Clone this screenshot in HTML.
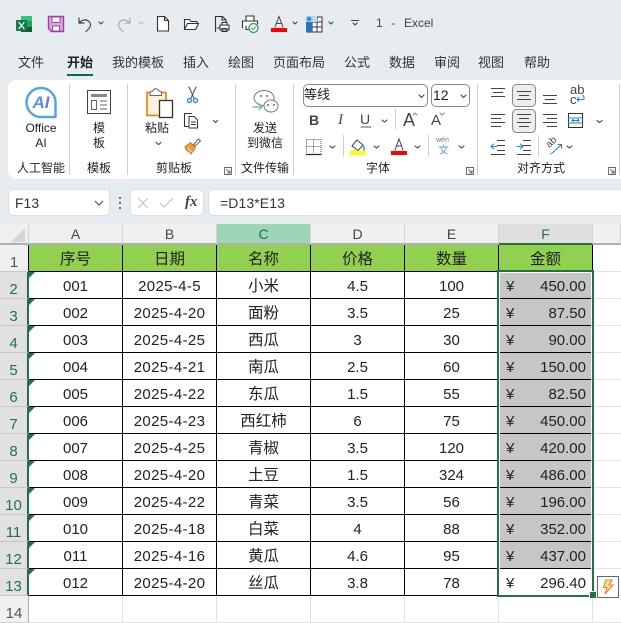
<!DOCTYPE html>
<html><head><meta charset="utf-8">
<style>
html,body{margin:0;padding:0;width:621px;height:623px;overflow:hidden;background:#e6ecf0}
body{position:relative;font-family:"Liberation Sans","Noto Sans CJK SC",sans-serif;color:#222}
.t{position:absolute;white-space:nowrap;font-size:12px;line-height:16px;text-align:center}
.tab{font-size:13px;top:54px;line-height:18px;color:#333}
.box{position:absolute;background:#fff;border:1px solid #dcdfe2;border-radius:5px;box-sizing:border-box}
table{position:absolute;left:0;top:224px;width:621px;border-collapse:separate;border-spacing:0;table-layout:fixed;font-size:15px}
td,th{padding:0;overflow:hidden;text-align:center;font-weight:normal;box-sizing:border-box;background:#fff;border-right:1px solid #e1e1e1;border-bottom:1px solid #e1e1e1;color:#222}
tr{height:27px}
tr.h{height:21px}
tr.h th{background:#f0f0f0;border-right:1px solid #d4d4d4;border-bottom:2px solid #b0b0b0;color:#444;line-height:17px;padding-top:2px;font-size:14px}
tr.h th.c{background:#9fd5b7;color:#217346}
tr.h th.f{background:#dfdfdf;color:#217346;border-bottom:2px solid #217346}
th.r{background:#e1e1e1;color:#217346;border-right:2px solid #217346;border-bottom:1px solid #c6c6c6;font-size:15px;position:relative}
th.r span{position:relative;top:4px}
th.n{background:#f0f0f0;color:#555;border-right:1px solid #b0b0b0;border-bottom:1px solid #d4d4d4;font-size:15px}
tr.g th.n{border-right:1px solid #000;border-bottom:1px solid #c6c6c6}
tr.d td{border-right:1px solid #000;border-bottom:1px solid #000;line-height:22px;padding-top:4px}
tr.d td:nth-child(3){letter-spacing:.35px}
tr.d td:nth-child(4){font-size:15.5px}
tr.g td{background:#92d050;border-right:1px solid #000;border-bottom:1px solid #000;font-size:15.5px;line-height:23px;padding-top:2px;color:#222}
td.a{position:relative}
td.a:before{content:"";position:absolute;left:0;top:0;border-top:6px solid #217346;border-right:6px solid transparent}
td.m{background:#c6c6c6;position:relative;text-align:right;padding-right:6px}
td.w{position:relative;text-align:right;padding-right:6px}
td.m i,td.w i{position:absolute;left:7px;top:4px;font-style:normal}
</style></head><body>

<div class="box" style="left:8px;top:80px;width:640px;height:99px;border:none;border-radius:8px"></div>

<svg width="621" height="623" style="position:absolute;left:0;top:0" fill="none" stroke-linecap="round">
<defs><linearGradient id="ai" x1="0" y1="0" x2="1" y2="0"><stop offset="0" stop-color="#4aa3ee"/><stop offset="1" stop-color="#7a6ce8"/></linearGradient></defs>
<!-- excel -->
<rect x="21" y="16" width="11" height="5" fill="#33c481"/><rect x="21" y="21" width="11" height="6" fill="#21a366"/><rect x="21" y="27" width="11" height="5" fill="#185c37"/>
<rect x="16" y="20" width="11" height="11" rx="1" fill="#107c41"/>
<path d="M19 22.500l5 6M24 22.500l-5 6" stroke="#fff" stroke-width="1.300"/>
<!-- save -->
<path d="M48.500 16.500h15v15h-12l-3-3z" fill="#d9a8dd" stroke="#9b3fa5" stroke-width="1.400"/>
<path d="M52 17v5.500h8V17z" fill="#fff" stroke="#9b3fa5"/><path d="M52.500 31v-5h7v5z" fill="#fff" stroke="#9b3fa5"/>
<!-- undo -->
<path d="M79 18v5h5M79.500 22.500c3-3 7-3.500 9.500-1 2.500 2.500 1.500 5.500-.5 7.500l-2.500 2.500" stroke="#444" stroke-width="1.200"/>
<path d="M99 22l2 2 2-2" stroke="#444" stroke-width="1.100"/>
<!-- redo -->
<path d="M130 18v5h-5M129.500 22.500c-3-3-7-3.500-9.500-1-2.500 2.500-1.500 5.500.5 7.500l2.500 2.500" stroke="#aaa" stroke-width="1.200"/>
<path d="M139 22l2 2 2-2" stroke="#bbb" stroke-width="1.100"/>
<!-- new -->
<path d="M157.500 16.500h7l4 4v10.500h-11zM164.500 16.500v4h4" fill="#fff" stroke="#333" stroke-width="1.100"/>
<!-- open -->
<path d="M184.500 29.500v-10h5l1.500 2h6v2M184.500 29.500l3-6h11l-3 6z" stroke="#333" stroke-width="1.100" fill="#fff"/>
<!-- preview -->
<path d="M215.500 31.500v-15h7l3.500 3.500v3M222 16.500v3.500h4" stroke="#333" stroke-width="1.100"/>
<path d="M219 28h-2M220 25h9v5h-9zM222 25v-2.500h5V25M222 28.500h5v3h-5z" stroke="#333" stroke-width="1.100" fill="#fff"/>
<!-- print check -->
<path d="M246 21v-5h8v5M242.500 28v-7h15v3M246 26v3.500h3" stroke="#333" stroke-width="1.100" fill="#fff"/>
<circle cx="253.500" cy="28" r="4.500" fill="#fff" stroke="#3c9f63" stroke-width="1.400"/><path d="M251.500 28l1.500 1.500 2.500-2.500" stroke="#3c9f63"/>
<!-- font color -->
<path d="M275 27l4-10.500 4 10.500M276.500 23.500h5" stroke="#444" stroke-width="1"/>
<rect x="271" y="28" width="16" height="4" fill="#f00"/>
<path d="M293 22l2 2 2-2" stroke="#444" stroke-width="1.100"/>
<!-- table -->
<rect x="307" y="17" width="15" height="15" stroke="#333" fill="#fff"/><path d="M312 17v15M317 17v15M307 22h15M307 27h15" stroke="#333" stroke-linecap="butt"/>
<rect x="306" y="22" width="6" height="10" fill="#1f74c4"/><rect x="312" y="16" width="5" height="6" fill="#bcdcf4"/>
<rect x="306" y="16" width="6" height="6" fill="#e6ecf0"/>
<path d="M306 19h6M309 16v6M307 17l4 4M311 17l-4 4" stroke="#2a7fd0" stroke-width="1"/>
<path d="M329 22l2 2 2-2M351.500 20.500h7M353 23l2 2 2-2" stroke="#444" stroke-width="1.100"/>

<!-- separators -->
<path d="M69.500 84v91M127.500 84v91M235.500 84v91M293.500 84v91M477.500 84v91M619.500 84v91M395.500 109v20M343.500 135v22M428.500 135v22M538.500 135v22" stroke="#cfcfcf" stroke-linecap="butt"/>

<!-- AI icon -->
<path d="M55.500 102.500A14.500 14.500 0 1 0 41 117H55.500z" stroke="#5aa1ec" stroke-width="2.500" stroke-linejoin="round"/>
<text x="41" y="108" text-anchor="middle" font-family="Liberation Sans" font-size="17" font-weight="bold" font-style="italic" fill="url(#ai)">AI</text>

<!-- template icon -->
<rect x="87.500" y="90.500" width="23" height="23" stroke="#444" fill="#fff"/>
<rect x="91" y="94" width="16" height="3" fill="#888"/>
<rect x="91.500" y="100.500" width="5" height="9" stroke="#666" stroke-width="1"/>
<path d="M100 101h7M100 105h7M100 109h7" stroke="#666" stroke-linecap="butt"/>

<!-- paste -->
<rect x="147" y="92.500" width="19" height="23" fill="#fff0d8" stroke="#e8851c" stroke-width="1.700"/>
<path d="M150 93c0-1 1-2 3-2 .5-3 5-3 5.500 0 2 0 3 1 3 2v2.500H150z" fill="#fff" stroke="#666"/>
<rect x="159.500" y="100.500" width="13" height="17" fill="#fff" stroke="#333" stroke-width="1.300"/>
<!-- scissors -->
<path d="M189 87l5 11M196 87l-5 11" stroke="#555" stroke-width="1.100"/>
<circle cx="189.500" cy="100.500" r="2" stroke="#2a83d0" stroke-width="1.300"/><circle cx="195.500" cy="100.500" r="2" stroke="#2a83d0" stroke-width="1.300"/>
<!-- copy -->
<path d="M188 126.500h-3.500v-13h7" stroke="#333" stroke-width="1.100"/>
<path d="M189 116.500h5l3.500 3.500v8h-8.500zM191.500 122h4M191.500 124.500h4" stroke="#333" stroke-width="1" fill="#fff"/>
<path d="M213.500 120.500l2 2 2-2" stroke="#444" stroke-width="1.100"/>
<!-- brush -->
<path d="M185 147l5.500-4.500 5 5-4.500 6.500-1.500-2.500-1 .5-1-2-1 .5z" fill="#f39a3c" stroke="#e8751c"/>
<path d="M188 148.500l3 3" stroke="#fff"/>
<path d="M193.500 144.500l5-5.500 2 2-5.500 5z" fill="#fff" stroke="#666"/>
<!-- paste chevron & launcher -->
<path d="M156 142.500l2.500 2 2.500-2" stroke="#444" stroke-width="1.100"/>
<path d="M224.500 167.500h7v7h-7zM226.500 169.500l3.500 3.500M230 170.500v2.500h-2.500" stroke="#666" stroke-width=".9"/>
<path d="M466.500 167.500h7v7h-7zM468.500 169.500l3.500 3.500M472 170.500v2.500h-2.500" stroke="#666" stroke-width=".9"/>
<path d="M608.500 167.500h7v7h-7zM610.500 169.500l3.500 3.500M614 170.500v2.500h-2.500" stroke="#666" stroke-width=".9"/>

<!-- wechat -->
<ellipse cx="264" cy="98" rx="10" ry="7.500" stroke="#777" stroke-width="1"/>
<ellipse cx="271" cy="106" rx="7" ry="6" fill="#fff" stroke="#777" stroke-width="1"/>
<path d="M253 107h9M259 104l3 3-3 3" stroke="#5bb98b" stroke-width="1.200"/>
<circle cx="261" cy="96" r="1" fill="#666"/><circle cx="267" cy="96" r="1" fill="#666"/><circle cx="268" cy="105" r="1" fill="#666"/><circle cx="274" cy="105" r="1" fill="#666"/>

<!-- font combos chevrons -->
<path d="M419 95l2.500 2.500 2.500-2.500M461 95l2.500 2.500 2.500-2.500M382 120l2.500 2 2.500-2M330 146l2.500 2 2.500-2M374 146l2.500 2 2.500-2M415 146l2.500 2 2.500-2M459 146l2.500 2 2.500-2M597 120.500l2.500 2 2.500-2M567 146l2.500 2 2.500-2" stroke="#444" stroke-width="1.100"/>
<!-- U underline -->
<path d="M361 127h10" stroke="#555"/>
<!-- grow/shrink carets -->
<path d="M413 115l2-2 2 2" stroke="#4f9bd9" stroke-width="1.100"/>
<path d="M440 113l2 2 2-2" stroke="#4f9bd9" stroke-width="1.100"/>
<!-- border icon -->
<path d="M306.500 139.500h14.500v14M306.500 139.500v14M306.500 146.500h14.500M313.500 139.500v14" stroke="#555" stroke-dasharray="1 1" stroke-linecap="butt"/>
<path d="M306 154.500h15.500" stroke="#222" stroke-width="1.200" stroke-linecap="butt"/>
<!-- fill icon -->
<path d="M352 146l5-6 6 5-5 5.500z" stroke="#444" fill="#fff"/><path d="M363 146c1.500 1 1.500 3 .5 4" stroke="#2a83d0" stroke-width="1.300"/>
<rect x="350" y="151" width="16" height="4" fill="#ff0"/>
<!-- font color 2 -->
<path d="M395 150l4-11 4 11M396.500 146h5" stroke="#444" stroke-width="1"/>
<rect x="391" y="151" width="16" height="4" fill="#f00"/>
<!-- wen char -->
<path d="M439 147h9M443.500 145v2M441 148c1 3 3 5 6 6M446 148c-1 3-3 5-6 6" stroke="#5aa1d8" stroke-width=".9"/>

<!-- align pressed boxes -->
<rect x="512.500" y="84.500" width="23" height="22" rx="4" fill="#ededed" stroke="#8a8a8a"/>
<rect x="512.500" y="109.500" width="23" height="23" rx="4" fill="#ededed" stroke="#8a8a8a"/>
<g stroke="#444" stroke-linecap="butt">
<path d="M491 88.500h14M493 92.500h10M491 96.500h14"/>
<path d="M517 91.500h14M519 95.500h10M517 99.500h14"/>
<path d="M543 95.500h14M545 99.500h10M543 103.500h14"/>
<path d="M491 114.500h14M491 118.500h10M491 122.500h14M491 126.500h10"/>
<path d="M517 114.500h14M519 118.500h10M517 122.500h14M519 126.500h10"/>
<path d="M543 114.500h14M547 118.500h10M543 122.500h14M547 126.500h10"/>
<path d="M497 140.500h8M497 145.500h8M497 150.500h8M491 154.500h14" stroke-width=".9"/>
<path d="M523 140.500h8M523 145.500h8M523 150.500h8M517 154.500h14" stroke-width=".9"/>
</g>
<path d="M491 146.500h6M493.500 144l-2.500 2.500 2.500 2.500M517 146.500h6M520.500 144l2.500 2.500-2.500 2.500" stroke="#2a83d0" stroke-width="1.100"/>
<!-- wrap arrow -->
<path d="M577 99.500h6c1.500 0 1.500-3 0-4M577 99.500l2-2M577 99.500l2 2" stroke="#2a83d0" stroke-width="1.100"/>
<!-- merge -->
<rect x="568.500" y="113.500" width="14" height="14" stroke="#333"/><path d="M568 118h15M568 123h15" stroke="#2a83d0" stroke-width="1"/><path d="M572 120.500h7M573.500 119l-1.500 1.500 1.500 1.500M577.500 119l1.500 1.500-1.500 1.500" stroke="#2a83d0" stroke-linecap="butt"/>
<!-- orientation -->
<path d="M551 154l10-9M558 144.500h3.500v3.500" stroke="#2a83d0" stroke-width="1.100"/>

<!-- formula bar icons -->
<circle cx="120" cy="198" r="1" fill="#444"/><circle cx="120" cy="203" r="1" fill="#444"/><circle cx="120" cy="208" r="1" fill="#444"/>
</svg>

<!-- tabs -->
<span class="t tab" style="left:18px">文件</span>
<span class="t tab" style="left:67px;font-weight:bold;color:#222">开始</span>
<div style="position:absolute;left:67px;top:74px;width:26px;height:2px;background:#0e6b3c"></div>
<span class="t tab" style="left:112px">我的模板</span>
<span class="t tab" style="left:183px">插入</span>
<span class="t tab" style="left:228px">绘图</span>
<span class="t tab" style="left:273px">页面布局</span>
<span class="t tab" style="left:344px">公式</span>
<span class="t tab" style="left:389px">数据</span>
<span class="t tab" style="left:434px">审阅</span>
<span class="t tab" style="left:478px">视图</span>
<span class="t tab" style="left:524px">帮助</span>
<span class="t" style="left:376px;top:15px;color:#444;font-size:12px">1</span>
<span class="t" style="left:391px;top:15px;color:#444;font-size:12px">-</span>
<span class="t" style="left:404px;top:15px;color:#444;font-size:12px">Excel</span>

<!-- ribbon text -->
<span class="t" style="left:11px;width:60px;top:120px">Office</span>
<span class="t" style="left:11px;width:60px;top:135px">AI</span>
<span class="t" style="left:69px;width:60px;top:120px">模</span>
<span class="t" style="left:69px;width:60px;top:135px">板</span>
<span class="t" style="left:137px;width:40px;top:120px">粘贴</span>
<span class="t" style="left:235px;width:60px;top:120px">发送</span>
<span class="t" style="left:235px;width:60px;top:135px">到微信</span>
<span class="t" style="left:11px;width:60px;top:160px">人工智能</span>
<span class="t" style="left:69px;width:60px;top:160px">模板</span>
<span class="t" style="left:144px;width:60px;top:160px">剪贴板</span>
<span class="t" style="left:235px;width:60px;top:160px">文件传输</span>
<span class="t" style="left:348px;width:60px;top:160px">字体</span>
<span class="t" style="left:511px;width:60px;top:160px">对齐方式</span>

<!-- font controls -->
<div style="position:absolute;left:302.500px;top:83.500px;width:125px;height:23px;box-sizing:border-box;border:1px solid #8a8a8a;border-radius:5px;background:transparent"></div>
<div style="position:absolute;left:430.500px;top:83.500px;width:39px;height:23px;box-sizing:border-box;border:1px solid #8a8a8a;border-radius:5px"></div>
<span class="t" style="left:304px;top:87px;font-size:13px">等线</span>
<span class="t" style="left:433px;top:87px;font-size:14px">12</span>
<span class="t" style="left:309px;top:112px;font-weight:bold;font-size:14px;color:#444">B</span>
<span class="t" style="left:338px;top:112px;font-style:italic;font-family:'Liberation Serif',serif;font-size:15px;color:#444">I</span>
<span class="t" style="left:360px;top:111px;font-size:14px;color:#444">U</span>
<span class="t" style="left:403px;top:112px;font-size:18px;color:#444">A</span>
<span class="t" style="left:431px;top:113px;font-size:15px;color:#444">A</span>
<span class="t" style="left:436px;top:136px;font-size:7px;line-height:9px;color:#777">wén</span>
<span class="t" style="left:570px;top:84px;font-size:13px;line-height:12px;color:#444">ab</span>
<span class="t" style="left:570px;top:94px;font-size:13px;line-height:11px;color:#444">c</span>
<span class="t" style="left:546px;top:137px;font-size:10px;line-height:11px;color:#444;transform:rotate(-45deg)">ab</span>

<!-- formula bar -->
<div class="box" style="left:8px;top:189px;width:102px;height:27px"></div>
<div class="box" style="left:130px;top:189px;width:74px;height:27px"></div>
<div class="box" style="left:208px;top:189px;width:420px;height:27px"></div>
<svg width="621" height="30" style="position:absolute;left:0;top:189px" fill="none"><path d="M95 12l4 4 4-4" stroke="#555" stroke-width="1.200"/><path d="M138 9l10 10M148 9l-10 10M160 14l4 4 9-9" stroke="#c4c4c4" stroke-width="1.200"/></svg>
<span class="t" style="left:15px;top:195px;font-size:14px;color:#333">F13</span>
<span class="t" style="left:185px;top:194px;font-size:15px;font-family:'Liberation Serif',serif;font-style:italic;color:#444"><b>fx</b></span>
<span class="t" style="left:220px;top:195px;font-size:14px;letter-spacing:.1px;color:#333">=D13*E13</span>

<!-- grid -->
<table>
<colgroup><col style="width:29px"><col style="width:94px"><col style="width:94px"><col style="width:94px"><col style="width:94px"><col style="width:94px"><col style="width:94px"><col style="width:28px"></colgroup>
<tr class="h"><th></th><th>A</th><th>B</th><th class="c">C</th><th>D</th><th>E</th><th class="f">F</th><th></th></tr>
<tr class="g"><th class="n"><span style="position:relative;top:4px">1</span></th><td>序号</td><td>日期</td><td>名称</td><td>价格</td><td>数量</td><td>金额</td><td style="background:#fff;border-right:0;border-bottom:1px solid #e1e1e1"></td></tr>
<tr class="d"><th class="r"><span>2</span></th><td class="a">001</td><td>2025-4-5</td><td>小米</td><td>4.5</td><td>100</td><td class="m"><i>¥</i>450.00</td><td style="border:0;border-bottom:1px solid #e1e1e1"></td></tr>
<tr class="d"><th class="r"><span>3</span></th><td class="a">002</td><td>2025-4-20</td><td>面粉</td><td>3.5</td><td>25</td><td class="m"><i>¥</i>87.50</td><td style="border:0;border-bottom:1px solid #e1e1e1"></td></tr>
<tr class="d"><th class="r"><span>4</span></th><td class="a">003</td><td>2025-4-25</td><td>西瓜</td><td>3</td><td>30</td><td class="m"><i>¥</i>90.00</td><td style="border:0;border-bottom:1px solid #e1e1e1"></td></tr>
<tr class="d"><th class="r"><span>5</span></th><td class="a">004</td><td>2025-4-21</td><td>南瓜</td><td>2.5</td><td>60</td><td class="m"><i>¥</i>150.00</td><td style="border:0;border-bottom:1px solid #e1e1e1"></td></tr>
<tr class="d"><th class="r"><span>6</span></th><td class="a">005</td><td>2025-4-22</td><td>东瓜</td><td>1.5</td><td>55</td><td class="m"><i>¥</i>82.50</td><td style="border:0;border-bottom:1px solid #e1e1e1"></td></tr>
<tr class="d"><th class="r"><span>7</span></th><td class="a">006</td><td>2025-4-23</td><td>西红柿</td><td>6</td><td>75</td><td class="m"><i>¥</i>450.00</td><td style="border:0;border-bottom:1px solid #e1e1e1"></td></tr>
<tr class="d"><th class="r"><span>8</span></th><td class="a">007</td><td>2025-4-25</td><td>青椒</td><td>3.5</td><td>120</td><td class="m"><i>¥</i>420.00</td><td style="border:0;border-bottom:1px solid #e1e1e1"></td></tr>
<tr class="d"><th class="r"><span>9</span></th><td class="a">008</td><td>2025-4-20</td><td>土豆</td><td>1.5</td><td>324</td><td class="m"><i>¥</i>486.00</td><td style="border:0;border-bottom:1px solid #e1e1e1"></td></tr>
<tr class="d"><th class="r"><span>10</span></th><td class="a">009</td><td>2025-4-22</td><td>青菜</td><td>3.5</td><td>56</td><td class="m"><i>¥</i>196.00</td><td style="border:0;border-bottom:1px solid #e1e1e1"></td></tr>
<tr class="d"><th class="r"><span>11</span></th><td class="a">010</td><td>2025-4-18</td><td>白菜</td><td>4</td><td>88</td><td class="m"><i>¥</i>352.00</td><td style="border:0;border-bottom:1px solid #e1e1e1"></td></tr>
<tr class="d"><th class="r"><span>12</span></th><td class="a">011</td><td>2025-4-16</td><td>黄瓜</td><td>4.6</td><td>95</td><td class="m"><i>¥</i>437.00</td><td style="border:0;border-bottom:1px solid #e1e1e1"></td></tr>
<tr class="d"><th class="r"><span>13</span></th><td class="a">012</td><td>2025-4-20</td><td>丝瓜</td><td>3.8</td><td>78</td><td class="w"><i>¥</i>296.40</td><td style="border:0;border-bottom:1px solid #e1e1e1"></td></tr>
<tr><th class="n"><span style="position:relative;top:4px">14</span></th><td></td><td></td><td></td><td></td><td></td><td></td><td style="border-right:0"></td></tr>
</table>

<!-- corner triangle -->
<svg width="29" height="21" style="position:absolute;left:0;top:224px"><path d="M25 4v14H11z" fill="#d6d6d6"/></svg>

<!-- selection -->
<div style="position:absolute;left:499px;top:272px;width:93px;height:323px;box-sizing:border-box;border:1px solid #fff;border-bottom:0"></div>
<div style="position:absolute;left:497px;top:270px;width:97px;height:327px;box-sizing:border-box;border:2px solid #217346"></div>
<div style="position:absolute;left:590px;top:592px;width:6px;height:6px;background:#217346;border:1px solid #fff;box-sizing:content-box;margin:-1px 0 0 -1px"></div>

<!-- flash fill -->
<div style="position:absolute;left:597px;top:576px;width:22px;height:22px;box-sizing:border-box;background:#fff;border:1px solid #666"></div>
<svg width="22" height="22" style="position:absolute;left:597px;top:576px" fill="none"><path d="M9 4h6l-3 5h4l-8 9 2-6.500H6.500z" fill="#fde3a8" stroke="#e8801c" stroke-width="1.100"/></svg>

</body></html>
